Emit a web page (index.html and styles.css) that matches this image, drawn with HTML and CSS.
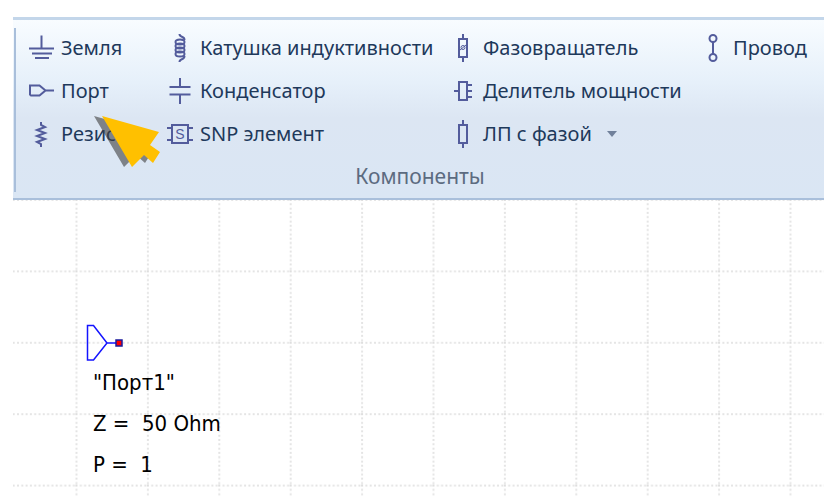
FILE: index.html
```html
<!DOCTYPE html>
<html lang="ru">
<head>
    <meta charset="UTF-8">
    <meta name="viewport" content="width=device-width, initial-scale=1.0">
    <title>Компоненты</title>
    <link rel="stylesheet" href="styles.css">
</head>
<body>
    <section class="ribbon" aria-labelledby="group-title">
        <div class="group">
            <div class="tools">
                <div class="column">
                    <button class="tool">
                        <svg class="icon" viewBox="0 0 26 28"> <!-- Ground -->
                            <path d="M13.500 1.500v13M1 14.500h25M4 19.500h20M7 24h14"/>
                        </svg>
                        Земля
                    </button>
                    <button class="tool">
                        <svg class="icon" viewBox="0 0 26 28"> <!-- Port -->
                            <path d="M2 8.500h9.500l6 5-6 5H3l-1-1zM17 13.500h9"/>
                        </svg>
                        Порт
                    </button>
                    <button class="tool">
                        <svg class="icon" viewBox="0 0 26 28"> <!-- Resistor -->
                            <path d="M13 2v3l4 2-8 3 8 3-8 3 8 3-8 3 4 2v3"/>
                        </svg>
                        Резистор
                    </button>
                </div>
                <div class="column">
                    <button class="tool">
                        <svg class="icon" viewBox="0 0 26 28"> <!-- Inductor -->
                            <path d="M12.500 0c0 4 5 1.500 5 6M12.500 28c0-4 5-1.500 5-6"/>
                            <ellipse cx="13" cy="8" rx="4.500" ry="2.500"/>
                            <ellipse cx="13" cy="12" rx="4.500" ry="2.500"/>
                            <ellipse cx="13" cy="16" rx="4.500" ry="2.500"/>
                            <ellipse cx="13" cy="20" rx="4.500" ry="2.500"/>
                        </svg>
                        Катушка индуктивности
                    </button>
                    <button class="tool">
                        <svg class="icon" viewBox="0 0 26 28"> <!-- Capacitor -->
                            <path d="M13 1v9M2.500 10h21M2.500 17.500h21M13 18v9"/>
                        </svg>
                        Конденсатор
                    </button>
                    <button class="tool">
                        <svg class="icon" viewBox="0 0 26 28"> <!-- S-parameter block -->
                            <path d="M5 5h16v18H5zM0 8h5M0 20h5M21 8h5M21 20h5"/>
                            <text class="icon-letter" x="13" y="19">S</text>
                        </svg>
                        SNP элемент
                    </button>
                </div>
                <div class="column">
                    <button class="tool">
                        <svg class="icon" viewBox="0 0 26 28"> <!-- Phase shifter -->
                            <path d="M9 5h8v18H9zM13 0v5M13 23v5"/>
                            <path class="thin" d="M10 16l6-5"/>
                            <circle class="thin" cx="13" cy="13.500" r="2"/>
                        </svg>
                        Фазовращатель
                    </button>
                    <button class="tool">
                        <svg class="icon" viewBox="0 0 26 28"> <!-- Power divider -->
                            <path d="M9 5h8v18H9zM4 14h5M17 8h5M17 14h5M17 20h5"/>
                        </svg>
                        Делитель мощности
                    </button>
                    <button class="tool">
                        <svg class="icon" viewBox="0 0 26 28"> <!-- Transmission line -->
                            <path d="M9 5h8v18H9zM13 0v5M13 23v5"/>
                        </svg>
                        ЛП с фазой
                        <svg class="caret" viewBox="0 0 10 6">
                            <path d="M0 0h10L5 6z"/>
                        </svg>
                    </button>
                </div>
                <div class="column">
                    <button class="tool">
                        <svg class="icon" viewBox="0 0 26 28"> <!-- Wire -->
                            <path d="M13 8v13"/>
                            <circle cx="13" cy="4.500" r="3.500"/>
                            <circle cx="13" cy="23.500" r="3.500"/>
                        </svg>
                        Провод
                    </button>
                </div>
            </div>
            <h2 class="group-title" id="group-title">Компоненты</h2>
        </div>
        <svg class="pointer" viewBox="0 0 68 52">
            <path class="pointer-shadow" d="M0 0l57 16-9 13 10 7-7 11-9-8-12 12z"/>
            <path class="pointer-arrow" d="M8 0l57 16-9 13 10 7-7 11-9-8-12 12z"/>
        </svg>
    </section>

    <main class="sheet">
        <svg class="grid">
            <defs>
                <pattern id="cells" x="62.500" y="-1" width="71.400" height="71.400" patternUnits="userSpaceOnUse">
                    <path d="M0 1h71.400M1 0v71.400"/>
                </pattern>
            </defs>
            <rect width="100%" height="100%" fill="url(#cells)"/>
        </svg>
        <div class="element">
            <svg class="element-symbol" viewBox="0 0 38 38"> <!-- Port with its pin -->
                <path class="symbol-line" d="M1.500 1.500h6L21 19 7.500 36h-6zM21 19h9"/>
                <rect class="symbol-pin" x="30" y="16" width="6" height="6"/>
            </svg>
            <p>"Порт1"</p>
            <p>Z =&nbsp; 50 Ohm</p>
            <p>P =&nbsp; 1</p>
        </div>
    </main>
</body>
</html>
```
FILE: styles.css
```css
* {
    box-sizing: border-box;
}

body {
    display: flex;
    flex-direction: column;
    min-height: 100vh;
    margin: 0;
    padding: 17px 14px 1px 13px;
    background: #ffffff;
    font-family: "Noto Sans", "Open Sans", sans-serif;
}

/* Ribbon */
.ribbon {
    position: relative;
    border-top: 3px solid #c3d6ea;
    border-bottom: 2px solid #a9bfdb;
    background: linear-gradient(#f8fcff, #e6f0fa 35%, #dce6f3 55%, #dae6f4);
    padding: 8px 0 6px;
}

.group {
    margin-left: 1px;
    border-left: 2px solid #a9bfdb;
}

.tools {
    display: grid;
    grid-template-columns: 139fr 283fr 250fr 124fr;
    padding-left: 12px;
}

.column {
    display: flex;
    flex-direction: column;
    align-items: flex-start;
    gap: 4px;
}

.tool {
    display: flex;
    align-items: center;
    gap: 7px;
    height: 39px;
    padding: 0;
    border: none;
    background: none;
    color: #1e395b;
    font-family: inherit;
    font-size: 20px;
    white-space: nowrap;
    cursor: pointer;
}

.icon {
    width: 26px;
    height: 28px;
    fill: none;
    stroke: #535c9c;
    stroke-width: 2;
}

.icon .thin {
    stroke-width: 1;
}

.icon-letter {
    fill: #535c9c;
    stroke: none;
    font-family: "Liberation Sans", sans-serif;
    font-size: 14px;
    text-anchor: middle;
}

.caret {
    width: 10px;
    height: 6px;
    margin-left: 8px;
    fill: #71819b;
}

.group-title {
    margin: 7px 0 0;
    color: #5c6b80;
    font-size: 21px;
    font-weight: normal;
    line-height: 32px;
    text-align: center;
}

.pointer {
    position: absolute;
    top: 96px;
    left: 81px;
    width: 68px;
    height: 52px;
}

.pointer-shadow {
    fill: rgba(64, 64, 64, 0.6);
}

.pointer-arrow {
    fill: #ffc000;
}

/* Schematic sheet */
.sheet {
    position: relative;
    flex: 1;
    padding: 124px 0 0 73px;
}

.grid {
    position: absolute;
    top: 0;
    left: 0;
    width: 100%;
    height: 100%;
}

.grid path {
    stroke: #dcdcdc;
    stroke-width: 1.500;
    stroke-dasharray: 2 2.300;
}

.element {
    position: relative;
    color: #000000;
    font-family: "DejaVu Sans Condensed", "DejaVu Sans", sans-serif;
    font-size: 22px;
    line-height: 41px;
}

.element p {
    margin: 0;
    padding-left: 7px;
}

.element-symbol {
    display: block;
    width: 38px;
    height: 38px;
}

.symbol-line {
    fill: none;
    stroke: #1414ff;
    stroke-width: 1.500;
}

.symbol-pin {
    fill: #ff0000;
    stroke: #1a1a9c;
    stroke-width: 1.500;
}
```
